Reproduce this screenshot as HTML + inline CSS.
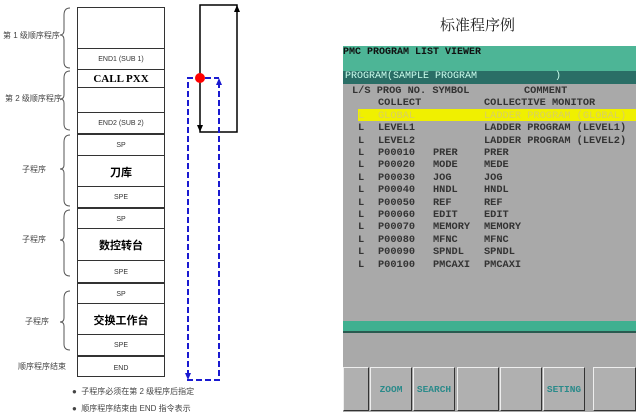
<!DOCTYPE html>
<html><head><meta charset="utf-8"><style>
body{margin:0;width:640px;height:415px;background:#fff;position:relative;overflow:hidden;font-family:"Liberation Sans","Noto Sans CJK SC",sans-serif}
.a{position:absolute}
.c{position:absolute;left:77px;width:88px;border-top:1px solid #333;font-size:7px;color:#333;display:flex;align-items:center;justify-content:center}
.big{font-weight:bold;font-size:11px;color:#000}
.lbl{position:absolute;font-size:8px;color:#444}
.m{font-family:"Liberation Mono",monospace;font-weight:bold;font-size:10.3px;color:#333;white-space:pre;position:absolute;line-height:12.4px}
.r{position:absolute;left:0;height:12.4px;width:640px}
.r span{position:absolute;top:0}
.b{position:absolute;top:367px;height:42px;background:#b0b0b0;border:1px solid #333;border-top-color:#eee;border-left-color:#eee;font-family:"Liberation Mono",monospace;font-weight:bold;font-size:9.5px;color:#2a8a8a;display:flex;align-items:center;justify-content:center}
</style></head><body>
<div class="a" style="left:77px;top:7px;width:88px;height:370px;border:1px solid #333;box-sizing:border-box"></div>
<div class="c" style="top:48px;height:21px">END1 (SUB 1)</div>
<div class="c big" style="top:69px;height:18px;font-family:'Liberation Serif',serif">CALL PXX</div>
<div class="c" style="top:87px;height:25px"></div>
<div class="c" style="top:112px;height:21px">END2 (SUB 2)</div>
<div class="c" style="top:133px;height:21px;border-top:2px solid #333">SP</div>
<div class="c big" style="top:155px;height:31px">刀库</div>
<div class="c" style="top:186px;height:21px">SPE</div>
<div class="c" style="top:207px;height:21px;border-top:2px solid #333">SP</div>
<div class="c big" style="top:228px;height:32px">数控转台</div>
<div class="c" style="top:260px;height:22px">SPE</div>
<div class="c" style="top:282px;height:21px;border-top:2px solid #333">SP</div>
<div class="c big" style="top:303px;height:31px">交换工作台</div>
<div class="c" style="top:334px;height:21px">SPE</div>
<div class="c" style="top:355px;height:22px;border-top:2px solid #333">END</div>
<div class="lbl" style="left:3px;top:30px">第 1 级顺序程序</div>
<div class="lbl" style="left:5px;top:93px">第 2 级顺序程序</div>
<div class="lbl" style="left:22px;top:164px">子程序</div>
<div class="lbl" style="left:22px;top:234px">子程序</div>
<div class="lbl" style="left:25px;top:316px">子程序</div>
<div class="lbl" style="left:18px;top:361px">顺序程序结束</div>
<div class="lbl" style="left:72px;top:386px">●&nbsp; 子程序必须在第 2 级程序后指定</div>
<div class="lbl" style="left:72px;top:403px">●&nbsp; 顺序程序结束由 END 指令表示</div>
<svg class="a" style="left:0;top:0" width="340" height="415">
<g fill="none" stroke="#555" stroke-width="1">
<path d="M70 8 Q64 8 64 15 V30 Q64 35 60 35 Q64 35 64 40 V62 Q64 68 70 68"/>
<path d="M70 71 Q64 71 64 78 V95 Q64 99 60 99 Q64 99 64 103 V124 Q64 130 70 130"/>
<path d="M70 135 Q64 135 64 142 V165 Q64 169 60 169 Q64 169 64 173 V200 Q64 206 70 206"/>
<path d="M70 210 Q64 210 64 217 V236 Q64 240 60 240 Q64 240 64 244 V270 Q64 276 70 276"/>
<path d="M70 291 Q64 291 64 298 V318 Q64 322 60 322 Q64 322 64 326 V344 Q64 350 70 350"/>
</g>
<path d="M200 5 H237 V132 H200 Z" fill="none" stroke="#000" stroke-width="1.5"/>
<path d="M234 12 L237 5 L240 12 Z"/>
<path d="M197 125 L200 132 L203 125 Z"/>
<path d="M219 82 V380 H188 V78 H219" fill="none" stroke="#1a1ad0" stroke-width="2" stroke-dasharray="6 3"/>
<path d="M216 85 L219 78 L222 85 Z M185 373 L188 380 L191 373 Z" fill="#1a1ad0"/>
<circle cx="200" cy="78" r="5" fill="#f00"/>
</svg>
<div class="a" style="left:440px;top:14px;font-family:'Noto Serif CJK SC',serif;font-size:15px;color:#222">标准程序例</div>
<div class="a" style="left:343px;top:46px;width:293px;height:366px;background:#a9a9a9"></div>
<div class="a" style="left:343px;top:46px;width:293px;height:25px;background:#4db596"></div>
<div class="m" style="left:343px;top:47px;color:#111;font-size:10px">PMC PROGRAM LIST VIEWER</div>
<div class="a" style="left:343px;top:71px;width:293px;height:13px;background:#2a6e66"></div>
<div class="m" style="left:345px;top:71px;color:#cfe;font-weight:normal;font-size:10px">PROGRAM(SAMPLE PROGRAM             )</div>
<div class="a" style="left:358px;top:109px;width:278px;height:12px;background:#f0f000"></div>
<div class="m" style="left:0;top:85px;width:640px;height:200px">
<div class="r" style="top:0"><span style="left:352px">L/S PROG NO. SYMBOL</span><span style="left:524px">COMMENT</span></div>
<div class="r" style="top:12.4px"><span style="left:378px">COLLECT</span><span style="left:484px">COLLECTIVE MONITOR</span></div>
<div class="r" style="top:24.8px;color:#d8d060;font-weight:normal"><span style="left:358px">L</span><span style="left:378px">GLOBAL</span><span style="left:484px">LADDER PROGRAM (GLOBAL)</span></div>
<div class="r" style="top:37.2px"><span style="left:358px">L</span><span style="left:378px">LEVEL1</span><span style="left:484px">LADDER PROGRAM (LEVEL1)</span></div>
<div class="r" style="top:49.6px"><span style="left:358px">L</span><span style="left:378px">LEVEL2</span><span style="left:484px">LADDER PROGRAM (LEVEL2)</span></div>
<div class="r" style="top:62px"><span style="left:358px">L</span><span style="left:378px">P00010</span><span style="left:433px">PRER</span><span style="left:484px">PRER</span></div>
<div class="r" style="top:74.4px"><span style="left:358px">L</span><span style="left:378px">P00020</span><span style="left:433px">MODE</span><span style="left:484px">MEDE</span></div>
<div class="r" style="top:86.8px"><span style="left:358px">L</span><span style="left:378px">P00030</span><span style="left:433px">JOG</span><span style="left:484px">JOG</span></div>
<div class="r" style="top:99.2px"><span style="left:358px">L</span><span style="left:378px">P00040</span><span style="left:433px">HNDL</span><span style="left:484px">HNDL</span></div>
<div class="r" style="top:111.6px"><span style="left:358px">L</span><span style="left:378px">P00050</span><span style="left:433px">REF</span><span style="left:484px">REF</span></div>
<div class="r" style="top:124px"><span style="left:358px">L</span><span style="left:378px">P00060</span><span style="left:433px">EDIT</span><span style="left:484px">EDIT</span></div>
<div class="r" style="top:136.4px"><span style="left:358px">L</span><span style="left:378px">P00070</span><span style="left:433px">MEMORY</span><span style="left:484px">MEMORY</span></div>
<div class="r" style="top:148.8px"><span style="left:358px">L</span><span style="left:378px">P00080</span><span style="left:433px">MFNC</span><span style="left:484px">MFNC</span></div>
<div class="r" style="top:161.2px"><span style="left:358px">L</span><span style="left:378px">P00090</span><span style="left:433px">SPNDL</span><span style="left:484px">SPNDL</span></div>
<div class="r" style="top:173.6px"><span style="left:358px">L</span><span style="left:378px">P00100</span><span style="left:433px">PMCAXI</span><span style="left:484px">PMCAXI</span></div>
</div>
<div class="a" style="left:343px;top:321px;width:293px;height:10px;background:#3fb090;border-bottom:2px solid #2a5a50"></div>
<div class="b" style="left:343px;width:24px"></div>
<div class="b" style="left:370px;width:40px">ZOOM</div>
<div class="b" style="left:413px;width:40px">SEARCH</div>
<div class="b" style="left:457px;width:40px"></div>
<div class="b" style="left:500px;width:40px"></div>
<div class="b" style="left:543px;width:40px">SETING</div>
<div class="b" style="left:593px;width:41px"></div>
</body></html>
